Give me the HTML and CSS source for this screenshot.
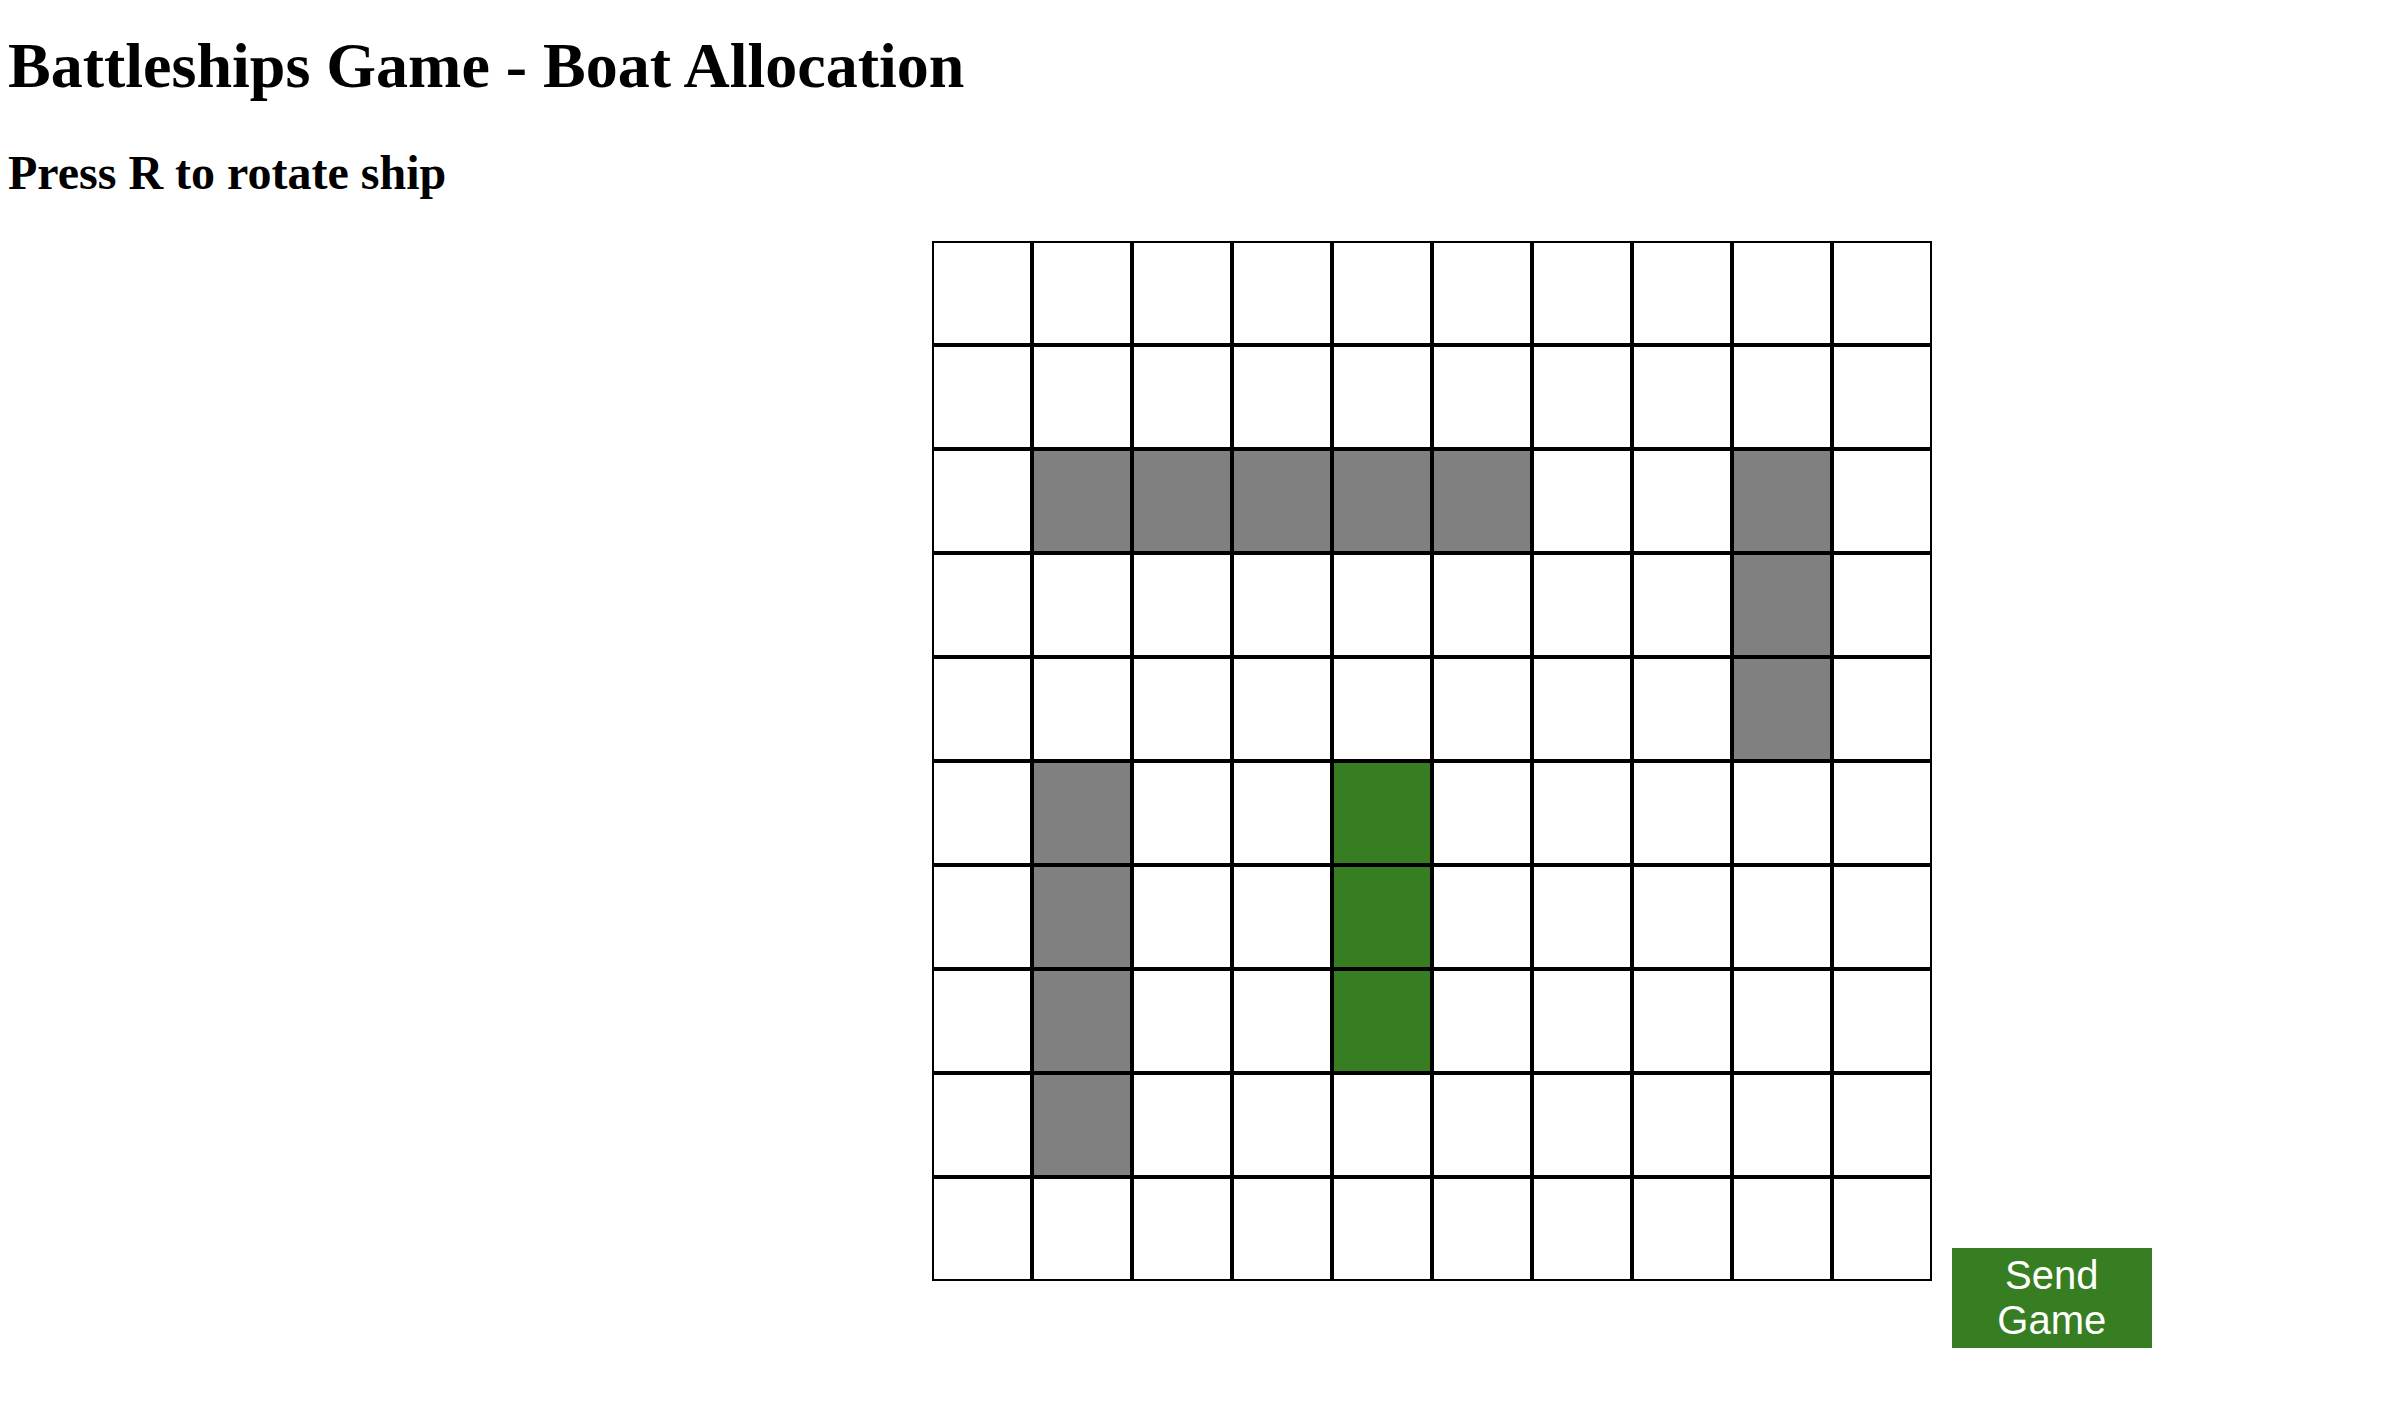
FILE: index.html
```html
<!DOCTYPE html>
<html lang="en">
<head>
<meta charset="utf-8">
<title>Battleships Game</title>
<link rel="stylesheet" href="styles.css">
</head>
<body>
<h1 class="title">Battleships Game - Boat Allocation</h1>
<h2 class="hint">Press R to rotate ship</h2>
<main class="play-area">
<div class="board">
<button class="cell"></button><button class="cell"></button><button class="cell"></button><button class="cell"></button><button class="cell"></button><button class="cell"></button><button class="cell"></button><button class="cell"></button><button class="cell"></button><button class="cell"></button>
<button class="cell"></button><button class="cell"></button><button class="cell"></button><button class="cell"></button><button class="cell"></button><button class="cell"></button><button class="cell"></button><button class="cell"></button><button class="cell"></button><button class="cell"></button>
<button class="cell"></button><button class="cell ship"></button><button class="cell ship"></button><button class="cell ship"></button><button class="cell ship"></button><button class="cell ship"></button><button class="cell"></button><button class="cell"></button><button class="cell ship"></button><button class="cell"></button>
<button class="cell"></button><button class="cell"></button><button class="cell"></button><button class="cell"></button><button class="cell"></button><button class="cell"></button><button class="cell"></button><button class="cell"></button><button class="cell ship"></button><button class="cell"></button>
<button class="cell"></button><button class="cell"></button><button class="cell"></button><button class="cell"></button><button class="cell"></button><button class="cell"></button><button class="cell"></button><button class="cell"></button><button class="cell ship"></button><button class="cell"></button>
<button class="cell"></button><button class="cell ship"></button><button class="cell"></button><button class="cell"></button><button class="cell preview"></button><button class="cell"></button><button class="cell"></button><button class="cell"></button><button class="cell"></button><button class="cell"></button>
<button class="cell"></button><button class="cell ship"></button><button class="cell"></button><button class="cell"></button><button class="cell preview"></button><button class="cell"></button><button class="cell"></button><button class="cell"></button><button class="cell"></button><button class="cell"></button>
<button class="cell"></button><button class="cell ship"></button><button class="cell"></button><button class="cell"></button><button class="cell preview"></button><button class="cell"></button><button class="cell"></button><button class="cell"></button><button class="cell"></button><button class="cell"></button>
<button class="cell"></button><button class="cell ship"></button><button class="cell"></button><button class="cell"></button><button class="cell"></button><button class="cell"></button><button class="cell"></button><button class="cell"></button><button class="cell"></button><button class="cell"></button>
<button class="cell"></button><button class="cell"></button><button class="cell"></button><button class="cell"></button><button class="cell"></button><button class="cell"></button><button class="cell"></button><button class="cell"></button><button class="cell"></button><button class="cell"></button>
</div>
<button class="send">Send Game</button>
</main>
</body>
</html>
```
FILE: styles.css
```css
body {
  margin: 0;
  padding: 29px 8px;
  background: #fff;
  color: #000;
  font-family: "Liberation Serif", "Times New Roman", serif;
}

.title {
  margin: 0 0 42px;
  font-size: 64px;
  line-height: 74px;
}

.hint {
  margin: 0 0 41px;
  font-size: 48px;
  line-height: 55px;
}

.play-area {
  display: flex;
  justify-content: flex-end;
  align-items: flex-end;
  gap: 20px;
  padding-right: 10%;
}

.board {
  display: grid;
  grid-template-columns: repeat(10, 100px);
  grid-auto-rows: 104px;
  margin-bottom: 67px;
}

.cell {
  padding: 0;
  border: 2px solid #000;
  border-radius: 0;
  background: #fff;
}

.ship {
  background: #808080;
}

.preview {
  background: #377e22;
}

.send {
  width: 200px;
  height: 100px;
  padding: 0 12px;
  border: 0;
  background: #377e22;
  color: #fff;
  font-family: "Liberation Sans", Arial, sans-serif;
  font-size: 40px;
  line-height: 45px;
}
```
